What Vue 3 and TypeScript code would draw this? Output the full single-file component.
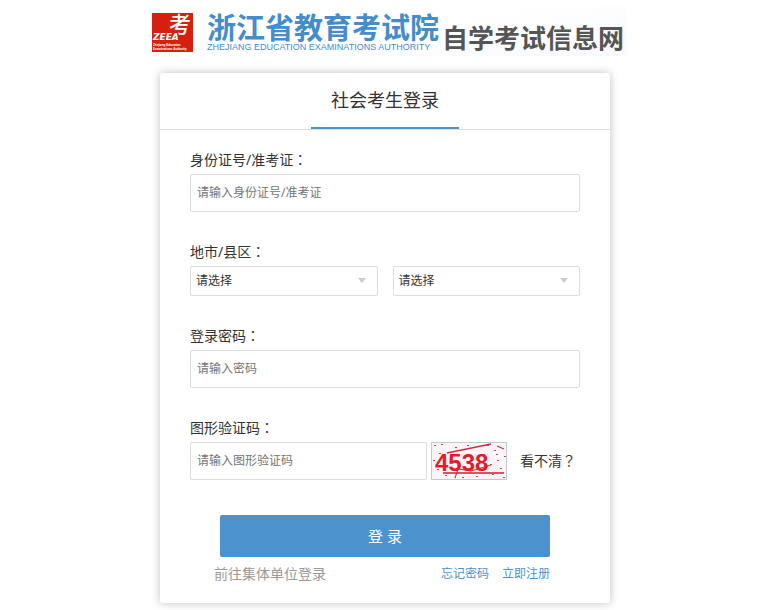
<script setup lang="ts">
import { ref } from 'vue'

interface Speck {
  x: number
  y: number
}

const account = ref('')
const city = ref('')
const county = ref('')
const password = ref('')
const captcha = ref('')

const specks: Speck[] = [
  { x: 3, y: 3 }, { x: 10, y: 2 }, { x: 2, y: 18 }, { x: 6, y: 27 }, { x: 14, y: 33 },
  { x: 24, y: 5 }, { x: 31, y: 35 }, { x: 45, y: 34 }, { x: 52, y: 12 }, { x: 59, y: 22 },
  { x: 63, y: 8 }, { x: 66, y: 18 }, { x: 69, y: 26 }, { x: 72, y: 35 }, { x: 61, y: 32 },
  { x: 73, y: 14 }, { x: 36, y: 3 }, { x: 56, y: 3 }, { x: 65, y: 12 }, { x: 8, y: 11 },
]
</script>

<template>
  <div class="page">
    <header class="banner">
      <svg class="emblem" viewBox="0 0 41 41" role="img" aria-label="ZEEA">
        <rect y="2" width="41" height="39" fill="#d5200f" />
        <text x="17" y="21" class="emblem-char">考</text>
        <text x="1" y="29" class="emblem-name">ZEEA</text>
        <text x="1" y="35" class="emblem-sub">Zhejiang Education</text>
        <text x="1" y="39" class="emblem-sub">Examinations Authority</text>
      </svg>
      <div class="names">
        <span class="org">浙江省教育考试院</span>
        <span class="org-en">ZHEJIANG EDUCATION EXAMINATIONS AUTHORITY</span>
      </div>
      <span class="site">自学考试信息网</span>
    </header>

    <main class="card">
      <div class="tabs">
        <h1 class="tab">社会考生登录</h1>
      </div>

      <form class="form" @submit.prevent>
        <div class="field">
          <label class="label" for="account">身份证号/准考证<span class="mark">：</span></label>
          <input id="account" v-model="account" class="control" type="text" placeholder="请输入身份证号/准考证" />
        </div>

        <div class="field">
          <label class="label" for="city">地市/县区<span class="mark">：</span></label>
          <div class="selects">
            <div class="select-box">
              <select id="city" v-model="city" class="select">
                <option value="">请选择</option>
              </select>
            </div>
            <div class="select-box">
              <select v-model="county" class="select" aria-label="县区">
                <option value="">请选择</option>
              </select>
            </div>
          </div>
        </div>

        <div class="field">
          <label class="label" for="password">登录密码<span class="mark">：</span></label>
          <input id="password" v-model="password" class="control" type="password" placeholder="请输入密码" />
        </div>

        <div class="field">
          <label class="label" for="captcha">图形验证码<span class="mark">：</span></label>
          <div class="captcha-row">
            <input id="captcha" v-model="captcha" class="control" type="text" placeholder="请输入图形验证码" />
            <svg class="captcha" viewBox="0 0 76 38" role="img" aria-label="4538">
              <rect x="0.5" y="0.5" width="75" height="37" fill="#fcf5f7" stroke="#b9cfc8" />
              <rect v-for="(s, i) in specks" :key="i" :x="s.x" :y="s.y" width="2" height="1" fill="#cf3b62" />
              <path d="M16 11 L60 2 M66 4 L73 7" stroke="#d02a4a" stroke-width="1.3" fill="none" />
              <path d="M12 31 H73" stroke="#c91c32" stroke-width="1.6" />
              <path d="M24 36 L27 27 L40 29 L60 23" stroke="#e0303c" stroke-width="1.2" fill="none" />
              <text x="4" y="29" class="captcha-text">4538</text>
            </svg>
            <a class="refresh" href="#">看不清<span class="mark">？</span></a>
          </div>
        </div>

        <button class="submit" type="submit">登 录</button>

        <nav class="links">
          <a class="group-link" href="#">前往集体单位登录</a>
          <a class="link" href="#">忘记密码</a>
          <a class="link" href="#">立即注册</a>
        </nav>
      </form>
    </main>
  </div>
</template>

<style>
body {
  margin: 0;
  background: #fff;
}
</style>

<style scoped>
.page {
  display: flex;
  flex-direction: column;
  align-items: center;
  box-sizing: border-box;
  padding: 6px 11px 7px 0;
  color: #333;
  font-family: "Noto Sans", "Noto Sans CJK SC", sans-serif;
  font-size: 14px;
}

.banner {
  display: flex;
  box-sizing: border-box;
  padding: 5px 3px 3px 5px;
  margin-left: 4px;
  margin-bottom: 17px;
  background: linear-gradient(170deg, #fff 50%, #f7f9fd);
}

.emblem {
  width: 41px;
  height: 41px;
  margin-right: 14px;
}

.emblem-char {
  fill: #fff;
  font: 500 22px "Noto Sans CJK SC", sans-serif;
}

.emblem-name {
  fill: #fff;
  font: italic 700 9px "DejaVu Sans", sans-serif;
}

.emblem-sub {
  fill: #fff;
  font: 700 3px "Liberation Sans", sans-serif;
}

.names {
  display: flex;
  flex-direction: column;
  color: #438dcc;
}

.org {
  font-family: "Noto Sans CJK SC", sans-serif;
  font-size: 29px;
  font-weight: 700;
  line-height: 30px;
}

.org-en {
  font-family: "Liberation Sans", sans-serif;
  font-size: 9px;
  line-height: 12px;
  white-space: nowrap;
}

.site {
  margin-left: 3px;
  padding-top: 10px;
  color: #555;
  font-family: "Noto Sans CJK SC", sans-serif;
  font-size: 26px;
  font-weight: 700;
  line-height: 32px;
}

.card {
  width: 100%;
  max-width: 450px;
  border-radius: 3px;
  background: #fff;
  box-shadow: 0 0 10px rgba(0, 0, 0, 0.25);
}

.tabs {
  display: flex;
  justify-content: center;
  border-bottom: 1px solid #ddd;
}

.tab {
  margin: 0;
  padding: 0 20px;
  border-bottom: 2px solid #4c93cd;
  font-size: 18px;
  font-weight: 400;
  line-height: 54px;
}

.form {
  padding: 16px 30px 15px;
}

.field {
  margin-bottom: 26px;
}

.label {
  display: block;
  line-height: 28px;
}

.mark {
  font-family: "Noto Sans CJK TC", sans-serif;
  line-height: 1;
}

.control,
.select {
  display: block;
  box-sizing: border-box;
  width: 100%;
  min-width: 0;
  border: 1px solid #ddd;
  border-radius: 2px;
  background: #fff;
  color: #333;
  font-family: inherit;
  font-size: 12px;
}

.control {
  height: 38px;
  padding: 0 6px 2px;
}

.control::placeholder {
  color: #757575;
  opacity: 1;
}

.selects {
  display: grid;
  grid-template-columns: 1fr 1fr;
  gap: 15px;
}

.select-box {
  position: relative;
}

.select-box::after {
  content: "";
  position: absolute;
  top: 12px;
  right: 12px;
  border: 4px solid transparent;
  border-top: 5px solid #ccc;
  border-bottom: 0;
  pointer-events: none;
}

.select {
  height: 30px;
  padding: 0 24px 2px 5px;
  appearance: none;
}

.captcha-row {
  display: flex;
  align-items: center;
}

.captcha-row .control {
  flex: 1;
}

.captcha {
  flex: none;
  width: 76px;
  height: 38px;
  margin: 0 13px 0 4px;
}

.captcha-text {
  fill: #e8192b;
  font: 700 24px "Liberation Sans", sans-serif;
}

.refresh {
  width: 60px;
  padding-bottom: 2px;
  color: #333;
  text-decoration: none;
  white-space: nowrap;
}

.submit {
  display: block;
  width: calc(100% - 60px);
  height: 42px;
  margin: 35px 30px 0;
  padding: 0 0 2px;
  border: 0;
  border-radius: 2px;
  background: #4c93cd;
  color: #fff;
  font-family: inherit;
  font-size: 15px;
}

.links {
  display: flex;
  align-items: center;
  gap: 13px;
  padding: 3px 30px 0 24px;
  line-height: 28px;
}

.links a {
  text-decoration: none;
}

.group-link {
  margin-right: auto;
  color: #999;
}

.link {
  color: #4c93cd;
  font-size: 12px;
}
</style>
